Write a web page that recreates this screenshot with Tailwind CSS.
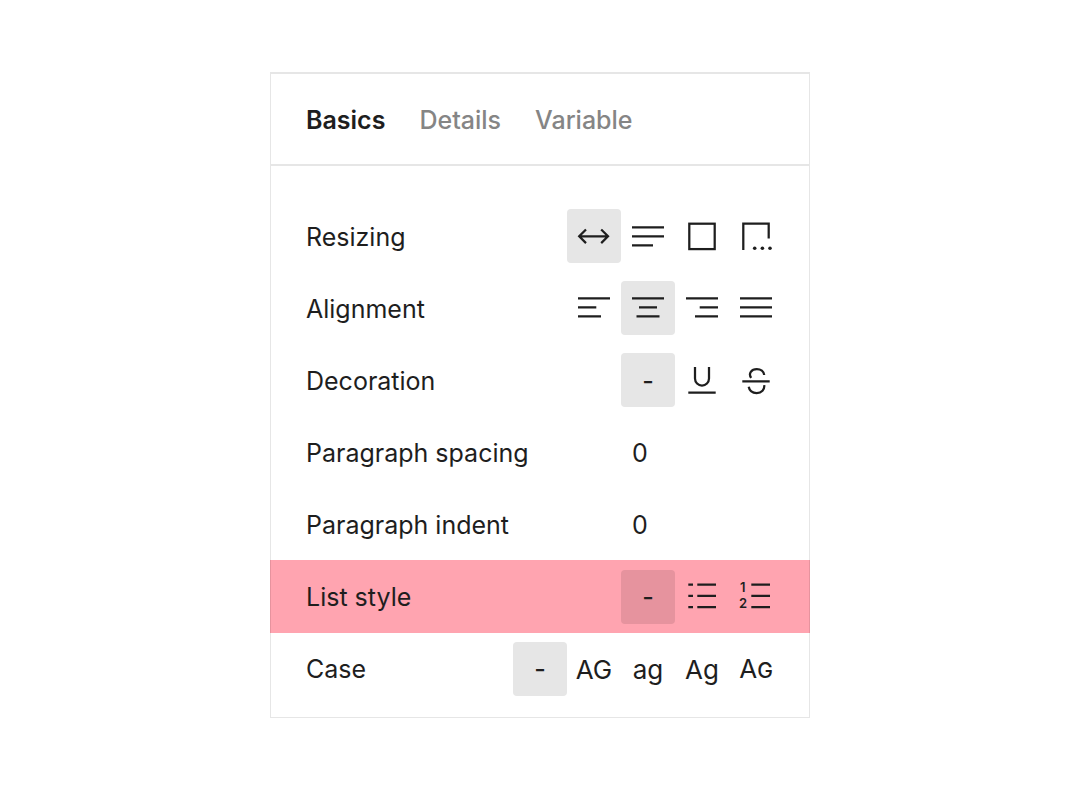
<!DOCTYPE html>
<html lang="en">
<head>
<meta charset="utf-8">
<meta name="viewport" content="width=device-width, initial-scale=1">
<title>Type settings</title>
<script src="https://cdn.jsdelivr.net/npm/@tailwindcss/browser@4"></script>
</head>
<body class="bg-white px-4 py-18 font-['Inter',sans-serif] text-[25px] leading-8 text-[#1e1e1e]">
<main class="mx-auto w-full max-w-[540px] border border-t-2 border-[#e6e6e6] pb-3">
  <nav class="flex gap-[34px] border-b-2 border-[#e6e6e6] px-[35px] pt-[30px] pb-7" aria-label="Type settings sections">
    <button type="button" class="font-semibold" aria-current="true">Basics</button>
    <button type="button" class="font-medium text-[#858585]">Details</button>
    <button type="button" class="font-medium text-[#858585]">Variable</button>
  </nav>

  <div class="pt-[34px]">
    <div class="flex h-18 items-center justify-between pr-[26px] pl-[35px]" role="group" aria-labelledby="resizing">
      <span id="resizing" class="pt-0.5">Resizing</span>
      <div class="flex">
        <button type="button" aria-pressed="true" aria-label="Auto width" class="size-[54px] rounded-sm bg-[#e6e6e6]">
          <svg viewBox="0 0 54 54" class="size-full" fill="none" stroke="currentColor" stroke-width="2.25"><path d="M12 27.3H41.4M19 20.5L12.2 27.3L19 34.1M34.2 20.5L41 27.3L34.2 34.1"/></svg>
        </button>
        <button type="button" aria-label="Auto height" class="size-[54px] rounded-sm">
          <svg viewBox="0 0 54 54" class="size-full" fill="none" stroke="currentColor" stroke-width="2.25"><path d="M11 18.3H43M11 27.3H43M11 36.3H32"/></svg>
        </button>
        <button type="button" aria-label="Fixed size" class="size-[54px] rounded-sm">
          <svg viewBox="0 0 54 54" class="size-full" fill="none" stroke="currentColor" stroke-width="2.25"><rect x="14.3" y="14.7" width="25.4" height="25.4"/></svg>
        </button>
        <button type="button" aria-label="Truncate text" class="size-[54px] rounded-sm">
          <svg viewBox="0 0 54 54" class="size-full" fill="none" stroke="currentColor" stroke-width="2.25"><path d="M14.3 41V14.7H39.7V29.6"/><g fill="currentColor" stroke="none"><circle cx="25.7" cy="39.2" r="1.8"/><circle cx="33.4" cy="39.2" r="1.8"/><circle cx="41" cy="39.2" r="1.8"/></g></svg>
        </button>
      </div>
    </div>

    <div class="flex h-18 items-center justify-between pr-[26px] pl-[35px]" role="group" aria-labelledby="alignment">
      <span id="alignment" class="pt-0.5">Alignment</span>
      <div class="flex">
        <button type="button" aria-label="Align left" class="size-[54px] rounded-sm">
          <svg viewBox="0 0 54 54" class="size-full" fill="none" stroke="currentColor" stroke-width="2.25"><path d="M11 17.3H43M11 26.3H29.3M11 35.3H34"/></svg>
        </button>
        <button type="button" aria-pressed="true" aria-label="Align center" class="size-[54px] rounded-sm bg-[#e6e6e6]">
          <svg viewBox="0 0 54 54" class="size-full" fill="none" stroke="currentColor" stroke-width="2.25"><path d="M11 17.3H43M18 26.3H36M15.5 35.3H38.5"/></svg>
        </button>
        <button type="button" aria-label="Align right" class="size-[54px] rounded-sm">
          <svg viewBox="0 0 54 54" class="size-full" fill="none" stroke="currentColor" stroke-width="2.25"><path d="M11 17.3H43M24.7 26.3H43M20 35.3H43"/></svg>
        </button>
        <button type="button" aria-label="Justify" class="size-[54px] rounded-sm">
          <svg viewBox="0 0 54 54" class="size-full" fill="none" stroke="currentColor" stroke-width="2.25"><path d="M11 17.3H43M11 26.3H43M11 35.3H43"/></svg>
        </button>
      </div>
    </div>

    <div class="flex h-18 items-center justify-between pr-[26px] pl-[35px]" role="group" aria-labelledby="decoration">
      <span id="decoration" class="pt-0.5">Decoration</span>
      <div class="flex">
        <button type="button" aria-pressed="true" class="size-[54px] rounded-sm bg-[#e6e6e6] pt-0.5 font-medium">-</button>
        <button type="button" aria-label="Underline" class="size-[54px] rounded-sm">
          <svg viewBox="0 0 54 54" class="size-full" fill="none" stroke="currentColor" stroke-width="2.25"><path d="M20 14V25.6A7 7 0 0 0 34 25.6V14M13.3 39.7H40.7"/></svg>
        </button>
        <button type="button" aria-label="Strikethrough" class="size-[54px] rounded-sm">
          <svg viewBox="0 0 54 54" class="size-full" fill="none" stroke="currentColor" stroke-width="2.25"><path d="M13.3 28.3H40.7M22.2 24.9C19 20.5 22.5 16 27.8 16C31.8 16 34.8 18.3 35.2 22M19.7 33.8C20.4 37.6 23.4 40 27.7 40C32.6 40 35.8 36.8 35.2 32.2"/></svg>
        </button>
      </div>
    </div>

    <div class="flex h-18 items-center justify-between pr-[26px] pl-[35px]">
      <label for="spacing" class="pt-0.5">Paragraph spacing</label>
      <input id="spacing" type="text" inputmode="numeric" value="0" class="h-[54px] w-[162px] pt-0.5 pl-[11px] outline-none">
    </div>

    <div class="flex h-18 items-center justify-between pr-[26px] pl-[35px]">
      <label for="indent" class="pt-0.5">Paragraph indent</label>
      <input id="indent" type="text" inputmode="numeric" value="0" class="h-[54px] w-[162px] pt-0.5 pl-[11px] outline-none">
    </div>

    <div class="-mx-px flex h-[73px] items-center justify-between border-x border-[#e6939e] bg-[#ffa4b0] pr-[26px] pl-[35px]" role="group" aria-labelledby="list-style">
      <span id="list-style">List style</span>
      <div class="flex">
        <button type="button" aria-pressed="true" class="size-[54px] rounded-sm bg-[#e6939e] font-medium">-</button>
        <button type="button" aria-label="Bulleted list" class="size-[54px] rounded-sm">
          <svg viewBox="0 0 54 54" class="size-full" fill="none" stroke="currentColor" stroke-width="2.25"><path d="M13.3 14.5H18M22.3 14.5H41M13.3 25.8H18M22.3 25.8H41M13.3 37H18M22.3 37H41"/></svg>
        </button>
        <button type="button" aria-label="Numbered list" class="size-[54px] rounded-sm">
          <svg viewBox="0 0 54 54" class="size-full" fill="none" stroke="currentColor" stroke-width="2.25"><path d="M22.3 14.5H41M22.3 25.8H41M22.3 37H41"/><g fill="currentColor" stroke="none" class="text-[13px] font-semibold"><text x="11" y="22">1</text><text x="10" y="38">2</text></g></svg>
        </button>
      </div>
    </div>

    <div class="flex h-18 items-center justify-between pr-[26px] pl-[35px]" role="group" aria-labelledby="case">
      <span id="case">Case</span>
      <div class="flex">
        <button type="button" aria-pressed="true" class="size-[54px] rounded-sm bg-[#e6e6e6] font-medium">-</button>
        <button type="button" class="size-[54px] rounded-sm pt-0.5 text-[26px]">AG</button>
        <button type="button" class="size-[54px] rounded-sm pt-0.5 text-[26px]">ag</button>
        <button type="button" class="size-[54px] rounded-sm pt-0.5 text-[26px]">Ag</button>
        <button type="button" class="size-[54px] rounded-sm pt-0.5 text-[26px]">A<span class="text-[21px] font-medium">G</span></button>
      </div>
    </div>
  </div>
</main>
</body>
</html>
